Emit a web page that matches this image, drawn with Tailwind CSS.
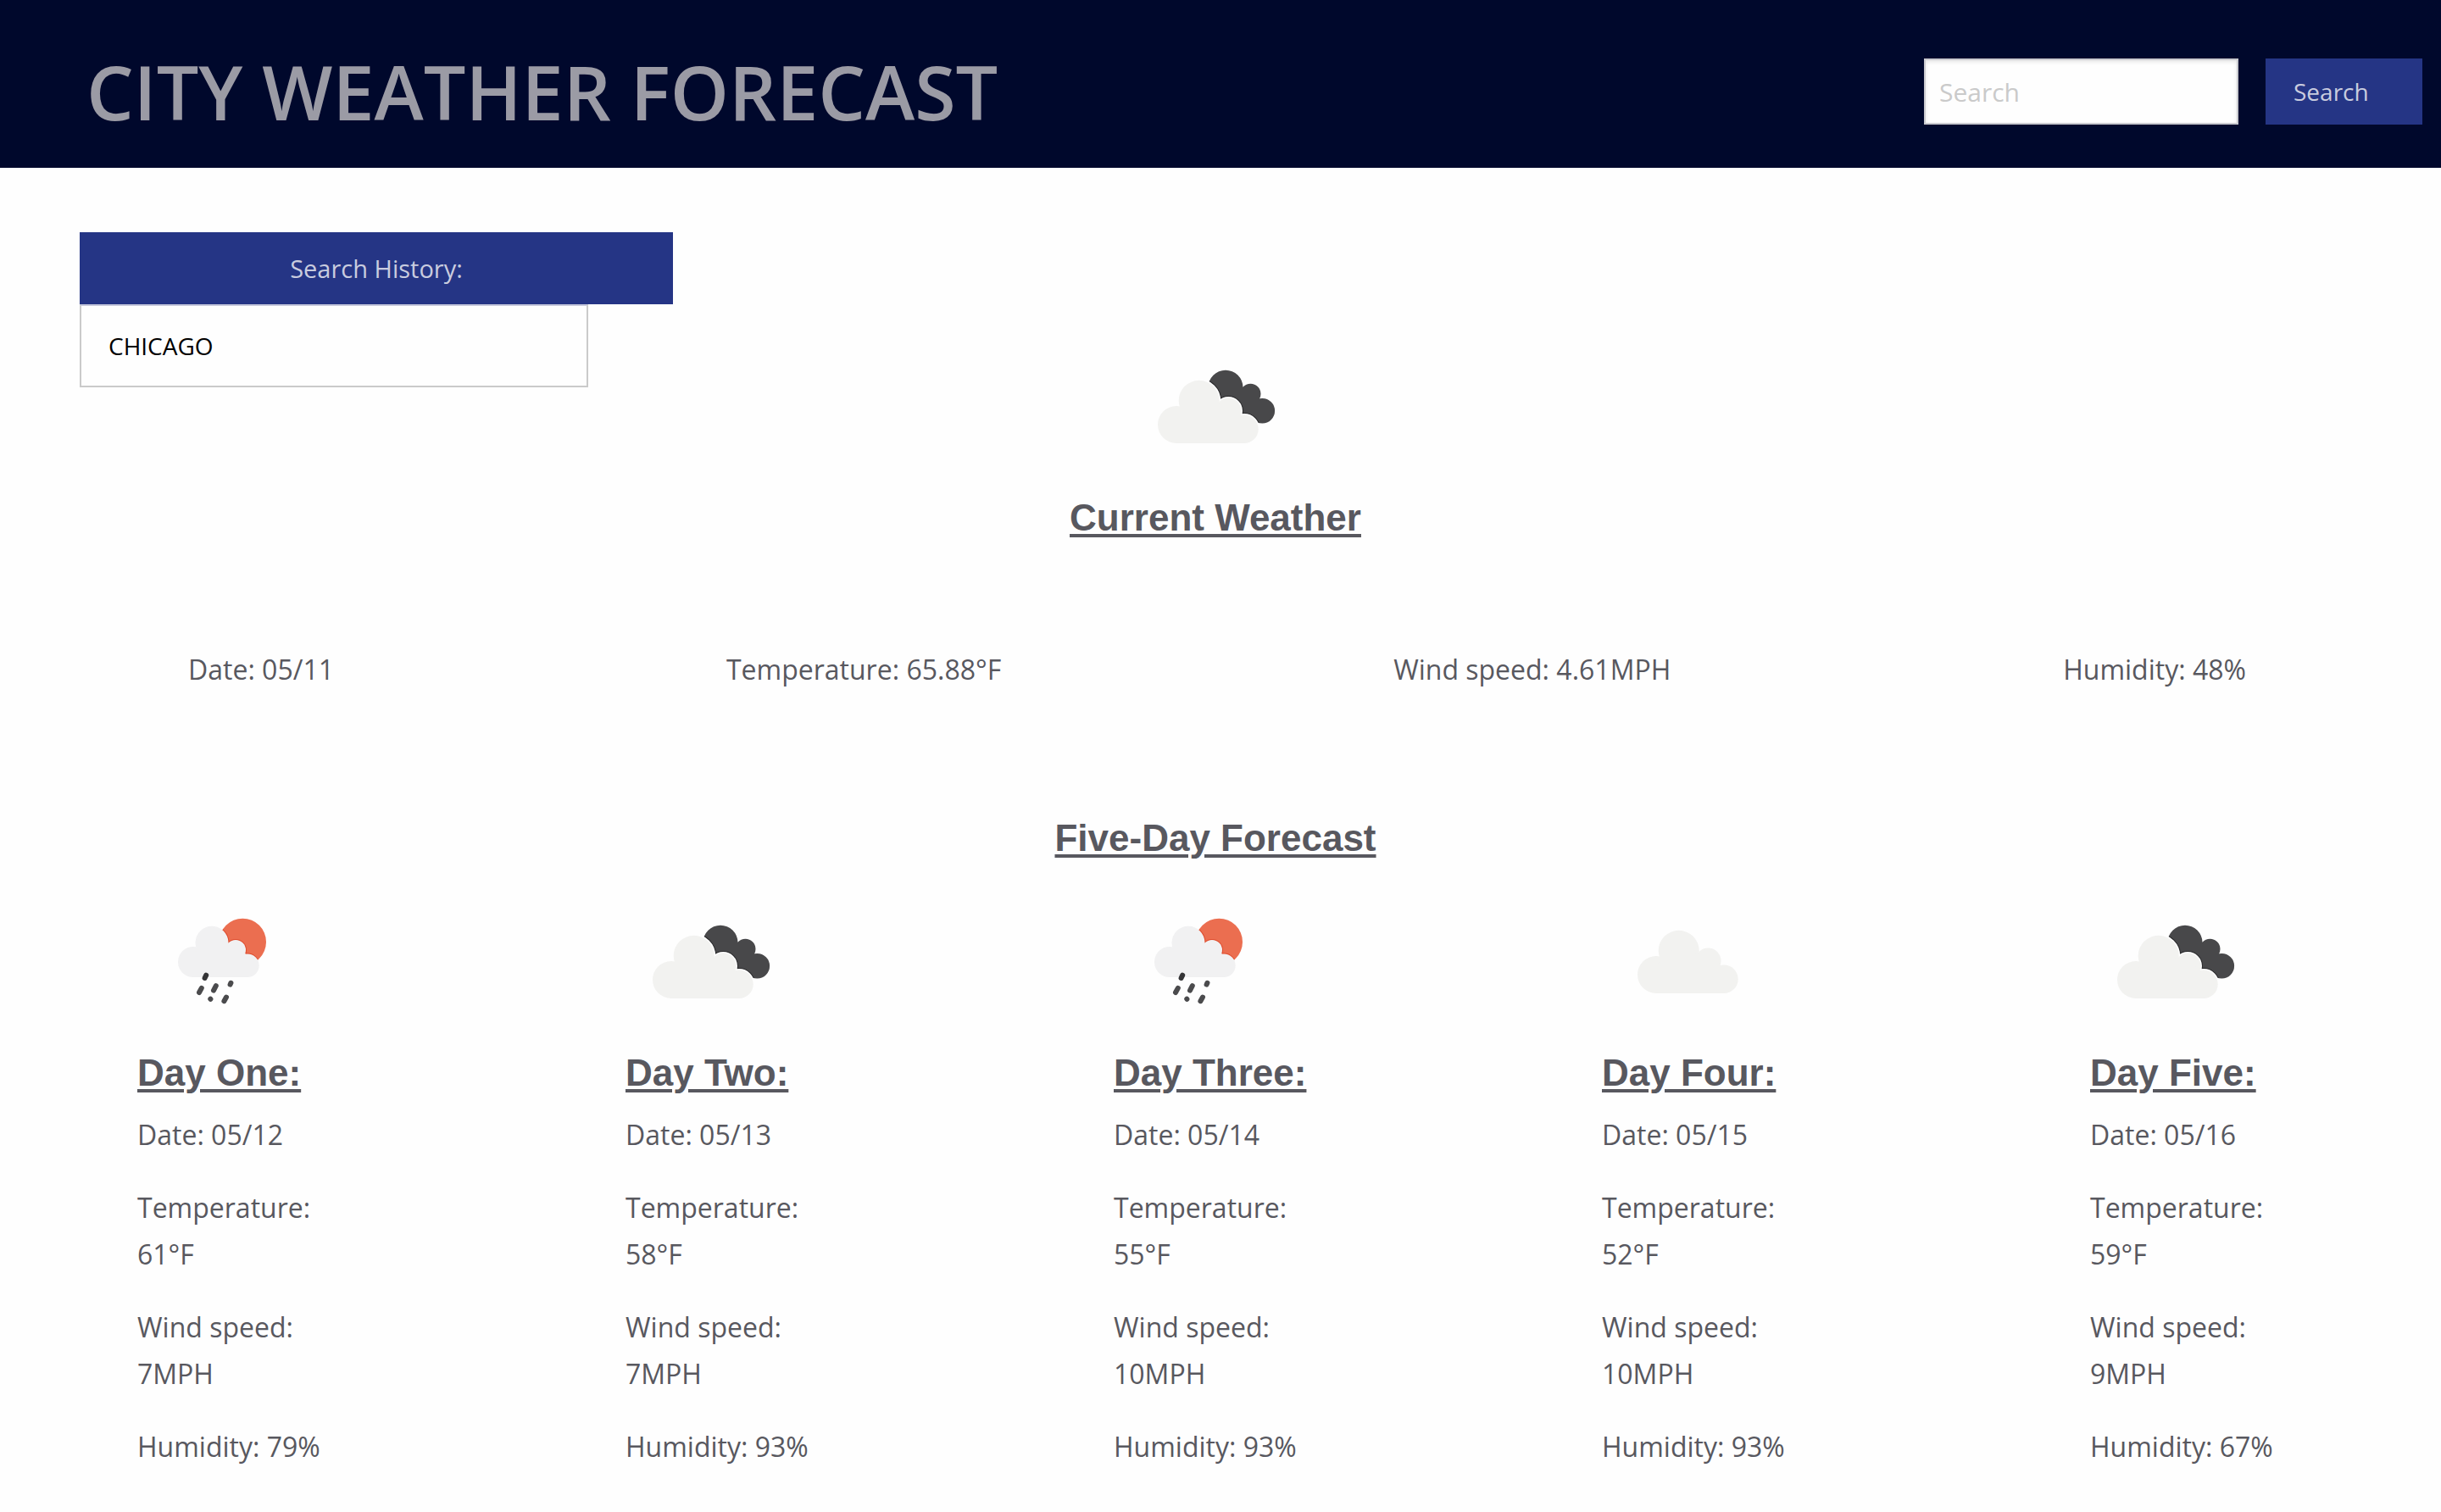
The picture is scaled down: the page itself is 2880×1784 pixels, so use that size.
<!DOCTYPE html>
<html lang="en">
<head>
<meta charset="utf-8">
<meta name="viewport" content="width=device-width, initial-scale=1">
<title>City Weather Forecast</title>
<script src="https://cdn.jsdelivr.net/npm/@tailwindcss/browser@4"></script>
</head>
<body class="min-h-screen bg-[#fefefe] font-['Open_Sans','Noto_Sans',sans-serif] text-[32px] leading-[55px] text-[#58585f]">

<svg class="absolute size-0" aria-hidden="true">
  <defs>
    <g id="cloud-shape">
      <circle cx="80.7" cy="92.8" r="24"/>
      <circle cx="54" cy="121" r="22"/>
      <circle cx="115.3" cy="104.7" r="15.2"/>
      <circle cx="134" cy="126.3" r="16.7"/>
      <path d="M54 143V110L75 90L118 100L135 115V143Z"/>
    </g>
    <clipPath id="dark-clip">
      <circle cx="112" cy="77.2" r="20.5"/>
      <circle cx="141.5" cy="84.7" r="12"/>
      <circle cx="155.3" cy="104.8" r="14.8"/>
      <path d="M112 77L141.5 84.7L155 105L140 120L95 90Z"/>
    </clipPath>
    <clipPath id="sun-clip"><circle cx="124.3" cy="76.4" r="27.7"/></clipPath>
    <symbol id="broken-clouds" viewBox="0 0 200 200">
      <g clip-path="url(#dark-clip)">
        <rect width="200" height="200" fill="#48484a"/>
        <use href="#cloud-shape" fill="#29292b" stroke="#29292b" stroke-width="5"/>
      </g>
      <use href="#cloud-shape" fill="#fefefe" stroke="#fefefe" stroke-width="3"/>
      <use href="#cloud-shape" fill="#f2f2f0"/>
    </symbol>
    <symbol id="scattered-clouds" viewBox="0 0 200 200">
      <use href="#cloud-shape" x="10" y="-6" fill="#f2f2f0"/>
    </symbol>
    <g id="rain-cloud">
      <circle cx="88" cy="77.2" r="19.5"/>
      <circle cx="66" cy="100" r="18"/>
      <circle cx="116" cy="86" r="12"/>
      <circle cx="130" cy="104.3" r="13.7"/>
      <path d="M66 118V90L84 76L118 84L130 92V118Z"/>
    </g>
    <symbol id="rain" viewBox="0 0 200 200">
      <g clip-path="url(#sun-clip)">
        <rect width="200" height="200" fill="#eb6e50"/>
        <use href="#rain-cloud" fill="#df4b2c" stroke="#df4b2c" stroke-width="2"/>
      </g>
      <use href="#rain-cloud" fill="#f1f1f2"/>
      <g fill="none" stroke="#4b4b4d" stroke-width="6" stroke-linecap="round">
        <path stroke="#343436" d="M81.2 115.6L79.6 119"/>
        <path d="M75.8 130.8L73 136M92.8 128.2L90 133.6M110.4 124.8L109.6 126.6M86.3 143.7L86.4 143.8M105 141.6L102.4 146.2"/>
      </g>
    </symbol>
  </defs>
</svg>

<header class="flex items-center justify-between bg-[#00082c] pt-[69px] pr-[22px] pb-[51px] pl-[102px]">
  <h1 class="text-[88px] leading-[78px] font-semibold text-[#9b9ba5]">CITY WEATHER FORECAST</h1>
  <form class="flex gap-8" onsubmit="return false">
    <input type="search" aria-label="Search for a city" placeholder="Search" class="h-[78px] w-[371px] appearance-none border-2 border-[#cacacf] bg-[#fefefe] px-4 text-[30px] text-black shadow-[inset_0_2px_4px_rgba(10,10,10,0.1)] placeholder:text-[#cacaca]">
    <button type="submit" class="h-[78px] w-[185px] bg-[#253585] pl-[33px] text-left text-[28px] text-[#c9ccdf]">Search</button>
  </form>
</header>

<main>
  <div class="grid grid-cols-1 items-start">
    <aside class="col-start-1 row-start-1 mt-[76px] ml-[94px] w-[700px] justify-self-start">
      <h2 class="bg-[#253585] text-center text-[29px] leading-[85px] text-[#c9ccdf]">Search History:</h2>
      <ul>
        <li><button type="button" class="h-[98px] w-[600px] border-2 border-[#cacaca] border-t-[#c6c8dc] px-8 text-left text-[28px] text-black">CHICAGO</button></li>
      </ul>
    </aside>
    <section class="col-start-1 row-start-1 mt-[182px] flex flex-col items-center justify-self-center pr-3 font-['Liberation_Sans',Arial,sans-serif]">
      <svg class="size-[200px]" role="img" aria-label="Broken clouds"><use href="#broken-clouds"/></svg>
      <h2 class="text-[44px] leading-[62px] font-bold underline decoration-4 underline-offset-[4px]">Current Weather</h2>
    </section>
  </div>

  <div class="mt-[120px] flex justify-between pr-[230px] pl-[222px]">
    <p>Date: 05/11</p>
    <p>Temperature: 65.88°F</p>
    <p>Wind speed: 4.61MPH</p>
    <p>Humidity: 48%</p>
  </div>

  <h2 class="mt-[141px] pr-3 text-center font-['Liberation_Sans',Arial,sans-serif] text-[44px] leading-[62px] font-bold underline decoration-4 underline-offset-[4px]">Five-Day Forecast</h2>

  <div id="days" class="mt-[15px] grid grid-cols-5"></div>
</main>

<template id="day">
  <article class="pl-[162px]">
    <svg class="size-[200px]" role="img"><use/></svg>
    <h3 class="mb-[14px] font-['Liberation_Sans',Arial,sans-serif] text-[44px] leading-[62px] font-bold underline decoration-4 underline-offset-[4px]"></h3>
    <div class="flex max-w-[250px] flex-col gap-[31px]"><p></p><p></p><p></p><p></p></div>
  </article>
</template>

<script>
const days = [
  ['One', 'rain', '05/12', 61, 7, 79],
  ['Two', 'broken-clouds', '05/13', 58, 7, 93],
  ['Three', 'rain', '05/14', 55, 10, 93],
  ['Four', 'scattered-clouds', '05/15', 52, 10, 93],
  ['Five', 'broken-clouds', '05/16', 59, 9, 67],
];
for (const [name, icon, date, temp, wind, humidity] of days) {
  const card = document.getElementById('day').content.cloneNode(true);
  card.querySelector('svg').setAttribute('aria-label', icon.replace('-', ' '));
  card.querySelector('use').setAttribute('href', '#' + icon);
  card.querySelector('h3').textContent = `Day ${name}:`;
  const lines = [`Date: ${date}`, `Temperature: ${temp}°F`, `Wind speed: ${wind}MPH`, `Humidity: ${humidity}%`];
  card.querySelectorAll('p').forEach((p, i) => { p.textContent = lines[i]; });
  document.getElementById('days').append(card);
}
</script>
</body>
</html>
